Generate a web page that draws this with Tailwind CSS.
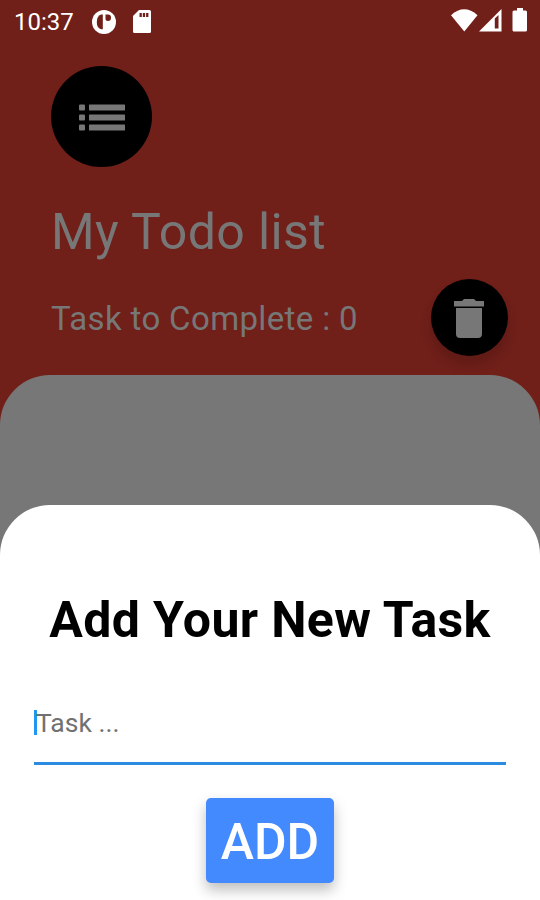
<!DOCTYPE html>
<html lang="en">
<head>
<meta charset="utf-8">
<title>My Todo list</title>
<script src="https://cdn.jsdelivr.net/npm/@tailwindcss/browser@4"></script>
</head>
<body class="font-[Roboto,sans-serif]">
<div class="relative w-[540px] h-[900px] overflow-hidden bg-[#701f19] flex flex-col">
  <header class="h-[66px] shrink-0 flex items-start justify-between pl-[14px] pr-[13px] text-white">
    <div class="flex items-center h-[43px]">
      <span class="w-[78px] text-[24px] leading-[28px]">10:37</span>
      <svg class="w-6 h-6" viewBox="0 0 24 24"><circle cx="12" cy="12" r="12" fill="currentColor"/><path d="M10.800 4.500V19.200H9Q4.800 18 4.800 12T9 4.500Z" fill="#701f19"/><path d="M13.500 4.500H16a3 3.200 0 0 1 0 6.400q-1.800 0-2.500-1.500Z" fill="#701f19"/></svg>
      <svg class="w-[18px] h-[23px] ml-[17px]" viewBox="0 0 18 23"><path d="M6 0h10.500Q18 0 18 1.500v20Q18 23 16.500 23h-15Q0 23 0 21.500V6Z" fill="currentColor"/><path d="M6.500 3h2.300v4H6.500zM9.800 3h2.300v4H9.800zM13.100 3h2.300v4h-2.300z" fill="#701f19"/></svg>
    </div>
    <svg class="w-[77px] h-[43px]" viewBox="450 0 77 43"><path d="M451 15.200Q464.300 3.500 477.500 15.200L464.300 31.500Z" fill="#fff"/><path d="M501.500 9v22.500H479Z" fill="#fff"/><path d="M494.800 18.500 498.500 15V28.500H494.800Z" fill="#701f19"/><path d="M517 8h6v2.500h2.500q1.500 0 1.500 1.500v18q0 1.500-1.500 1.500h-11.500q-1.500 0-1.500-1.500V12q0-1.500 1.500-1.500h3Z" fill="#fff"/></svg>
  </header>

  <section class="shrink-0 h-[309px] pl-[51px] pr-8 text-[#777777]">
    <div class="size-[101px] rounded-full bg-black flex items-center justify-center pt-[2px]">
      <svg class="w-[46px] h-[27px]" viewBox="0 0 46 27" fill="currentColor"><rect y="0.500" width="6" height="6" rx="1"/><rect y="10.500" width="6" height="6" rx="1"/><rect y="20.500" width="6" height="6" rx="1"/><rect x="10" y="0.500" width="36" height="6" rx=".5"/><rect x="10" y="10.500" width="36" height="6" rx=".5"/><rect x="10" y="20.500" width="36" height="6" rx=".5"/></svg>
    </div>
    <h1 class="mt-[35px] text-[50px] leading-[60px] tracking-[0.4px] whitespace-nowrap">My Todo list</h1>
    <div class="mt-[17px] flex items-center justify-between">
      <p class="pt-[3px] text-[33px] leading-[40px] tracking-[0.36px] whitespace-nowrap">Task to Complete : 0</p>
      <button class="size-[77px] rounded-full bg-black flex items-center justify-center pt-[2px] pr-[1px] shadow-[0_9px_12px_rgba(0,0,0,0.14)]">
        <svg class="w-[30px] h-[39px]" viewBox="0 0 30 39" fill="currentColor"><path d="M0 2h8L10 0h10l2 2h8v5.500H0ZM2 9h26v26q0 4-4 4H6q-4 0-4-4Z"/></svg>
      </button>
    </div>
  </section>

  <main class="grow rounded-t-[50px] bg-[#777777]"></main>

  <section class="absolute inset-x-0 bottom-0 h-[395px] rounded-t-[50px] bg-white px-[34px] pt-[85px] flex flex-col items-center">
    <h2 class="text-[50px] leading-[60px] tracking-[0.36px] font-bold text-black whitespace-nowrap">Add Your New Task</h2>
    <div class="mt-[48px] w-full h-[67px] border-b-[3px] border-[#2b8be0] flex items-start pt-[12px]">
      <span class="w-[3px] h-[25px] shrink-0 bg-[#2196f3]"></span>
      <span class="-ml-[1px] text-[26.500px] leading-[30px] -mt-[2px] text-[#717171] whitespace-nowrap">Task ...</span>
    </div>
    <button class="mt-[33px] w-[128px] h-[85px] shrink-0 rounded-[5px] bg-[#448aff] text-white text-[50px] leading-[60px] font-medium pt-[3px] shadow-[0_7px_14px_rgba(0,0,0,0.26)]">ADD</button>
  </section>
</div>
</body>
</html>
